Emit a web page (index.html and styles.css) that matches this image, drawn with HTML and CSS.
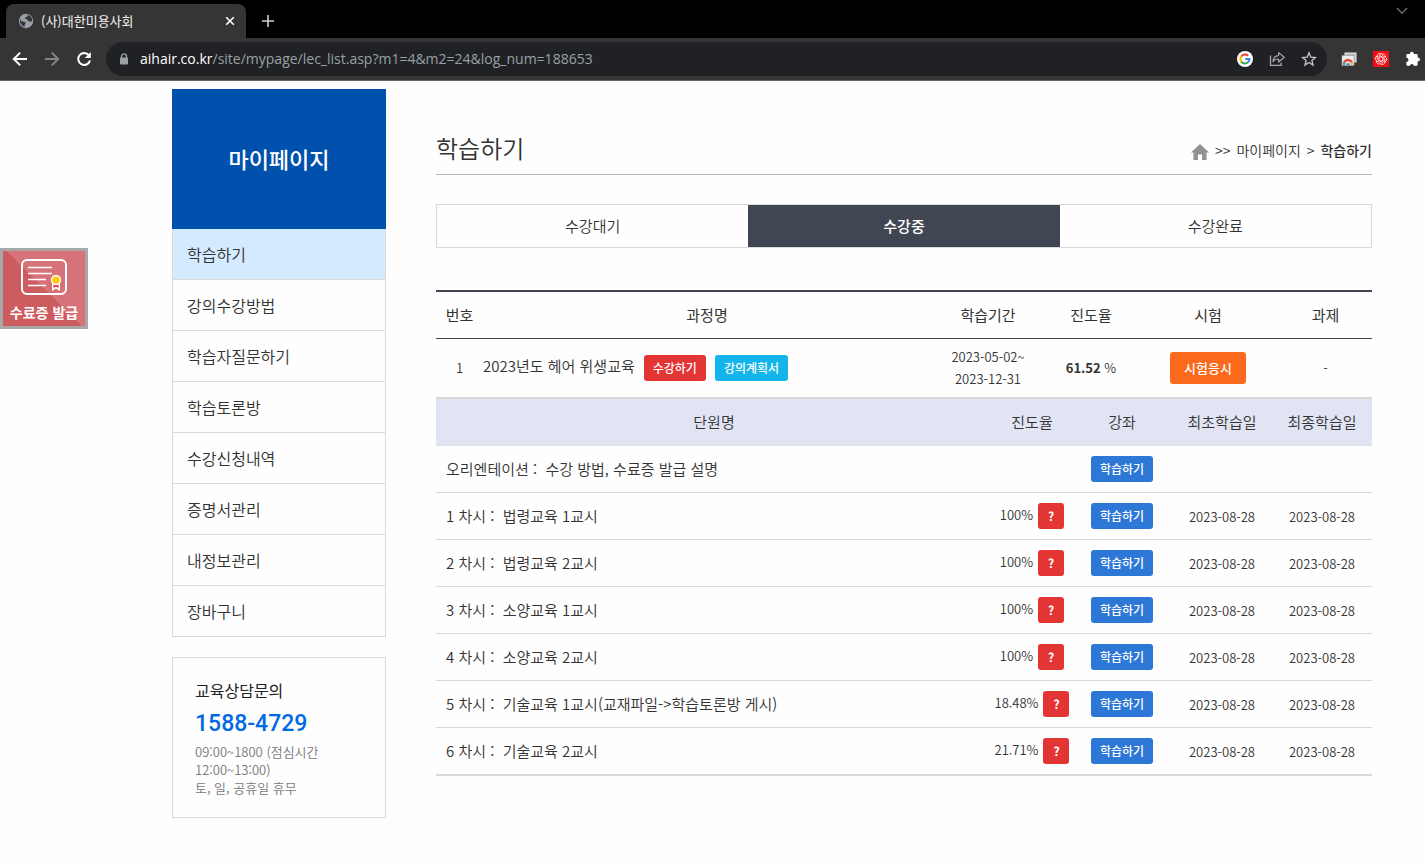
FILE: index.html
```html
<!DOCTYPE html>
<html lang="ko">
<head>
    <meta charset="UTF-8">
    <meta name="viewport" content="width=device-width, initial-scale=1.0">
    <title>(사)대한미용사회</title>
    <link rel="stylesheet" href="styles.css">
</head>
<body>
<!-- Browser window -->
<div class="browser">
    <div class="tab-strip">
        <div class="browser-tab">
            <svg class="globe" viewBox="0 0 16 16" width="16" height="16">
                <circle cx="8" cy="8" r="7.2" fill="#9aa0a8"/>
                <path d="M2 5.6 L3 8.2 L6 8.4 L8 10 L6.8 11.4 L6.6 13.8 L4.4 12.8 L2 9.8Z M7 2 L10 1.8 L9.6 3.4 L7.4 4.2 L7 5.8 L9.4 6.6 L10.6 8.6 L14 8.4 L14 5.6 L12.6 3.6 L11 2.6 L10 1.6Z" fill="#35363a"/>
            </svg>
            <span class="tab-title">(사)대한미용사회</span>
            <button type="button" class="icon-btn" aria-label="탭 닫기">
                <svg viewBox="0 0 10 10" width="10" height="10"><path d="M1.2 1.2 L8.8 8.8 M8.8 1.2 L1.2 8.8" stroke="#fff" stroke-width="1.6"/></svg>
            </button>
        </div>
        <button type="button" class="icon-btn new-tab" aria-label="새 탭">
            <svg viewBox="0 0 12 12" width="12" height="12"><path d="M6 0 V12 M0 6 H12" stroke="#cfcfcf" stroke-width="1.6"/></svg>
        </button>
        <button type="button" class="icon-btn tab-search" aria-label="탭 검색">
            <svg viewBox="0 0 12 8" width="12" height="8"><path d="M1 1 L6 6.4 L11 1" fill="none" stroke="#777" stroke-width="1.2"/></svg>
        </button>
    </div>
    <div class="toolbar">
        <div class="nav-buttons">
            <button type="button" class="icon-btn" aria-label="뒤로">
                <svg viewBox="0 0 16 16" width="16" height="16"><path d="M15 8 H2 M8.2 1.6 L1.8 8 L8.2 14.4" fill="none" stroke="#fff" stroke-width="2"/></svg>
            </button>
            <button type="button" class="icon-btn" aria-label="앞으로">
                <svg viewBox="0 0 16 16" width="16" height="16"><path d="M1 8 H14 M7.8 1.6 L14.2 8 L7.8 14.4" fill="none" stroke="#858585" stroke-width="2"/></svg>
            </button>
            <button type="button" class="icon-btn" aria-label="새로고침">
                <svg viewBox="0 0 16 16" width="16" height="16"><path d="M13.2 4.6 A6 6 0 1 0 14 9.6" fill="none" stroke="#fff" stroke-width="2"/><path d="M14.8 1 V7 H8.8Z" fill="#fff"/></svg>
            </button>
        </div>
        <div class="address-bar">
            <svg viewBox="0 0 10 12" width="10" height="12"><path d="M2.5 5 V3.4 A2.5 2.5 0 0 1 7.5 3.4 V5" fill="none" stroke="#9aa0a6" stroke-width="1.4"/><rect x="1" y="4.4" width="8" height="7" rx="1" fill="#9aa0a6"/></svg>
            <div class="url" role="textbox" contenteditable="true" spellcheck="false" aria-label="주소"><span class="host">aihair.co.kr</span>/site/mypage/lec_list.asp?m1=4&amp;m2=24&amp;log_num=188653</div>
            <div class="address-icons">
                <button type="button" class="icon-btn" aria-label="Google">
                    <svg viewBox="0 0 16 16" width="16" height="16">
                        <circle cx="8" cy="8" r="8" fill="#fff"/>
                        <g fill="none" stroke-width="2.2">
                            <path d="M4.3 5.4 A4.5 4.5 0 0 1 11.2 4.8" stroke="#ea4335"/>
                            <path d="M4.3 10.6 A4.5 4.5 0 0 1 4.3 5.4" stroke="#fbbc05"/>
                            <path d="M11 11.3 A4.5 4.5 0 0 1 4.3 10.6" stroke="#34a853"/>
                            <path d="M8.2 8 H12.5 A4.5 4.5 0 0 1 11 11.3" stroke="#4285f4"/>
                        </g>
                    </svg>
                </button>
                <button type="button" class="icon-btn" aria-label="공유">
                    <svg viewBox="0 0 16 16" width="16" height="16"><path d="M1.5 4.4 V14.4 H12.2 V11.5" fill="none" stroke="#a5a8ad" stroke-width="1.3"/><path d="M4 10.6 C4.2 7 6.2 4.8 9.6 4.6 V1.6 L15.2 6.3 L9.6 11 V8 C7 8 5.2 8.8 4 10.6Z" fill="none" stroke="#a5a8ad" stroke-width="1.2" stroke-linejoin="round"/></svg>
                </button>
                <button type="button" class="icon-btn" aria-label="북마크">
                    <svg viewBox="0 0 16 16" width="16" height="16"><path d="M8 1.8 L9.8 6.2 L14.4 6.5 L10.9 9.4 L12 14 L8 11.5 L4 14 L5.1 9.4 L1.6 6.5 L6.2 6.2Z" fill="none" stroke="#c4c6c9" stroke-width="1.3"/></svg>
                </button>
            </div>
        </div>
        <div class="extensions">
            <button type="button" class="icon-btn" aria-label="캡처">
                <svg viewBox="0 0 16 16" width="16" height="16"><rect x="4" y="2" width="11" height="9" fill="#b8bcc2" stroke="#eee"/><rect x="1" y="4.5" width="12" height="10" fill="#eceef0" stroke="#999" stroke-width=".6"/><path d="M3 13 A4 4 0 0 1 11 13" fill="none" stroke="#e8453c" stroke-width="2.4"/><path d="M3 13.9 V11" stroke="#3aa757" stroke-width="2"/><path d="M11 13.9 V11" stroke="#f9bb2d" stroke-width="2"/><path d="M5 14 A2 2 0 0 1 9 14Z" fill="#4688f1"/></svg>
            </button>
            <button type="button" class="icon-btn" aria-label="ChatGPT">
                <svg viewBox="0 0 16 16" width="16" height="16"><rect width="16" height="16" fill="#f80d12"/><g fill="none" stroke="#fff" stroke-width="0.8"><path id="petal" d="M6 9.2 V5 L8.6 3.3 A2.6 2.6 0 0 1 12.5 6"/><use href="#petal" transform="rotate(60 8 8)"/><use href="#petal" transform="rotate(120 8 8)"/><use href="#petal" transform="rotate(180 8 8)"/><use href="#petal" transform="rotate(240 8 8)"/><use href="#petal" transform="rotate(300 8 8)"/></g></svg>
            </button>
            <button type="button" class="icon-btn" aria-label="확장 프로그램">
                <svg viewBox="0 0 16 16" width="16" height="16"><path d="M1.4 4 Q1.4 3 2.4 3 H5 V2.6 A1.9 1.9 0 0 1 8.8 2.6 V3 H11.6 Q12.6 3 12.6 4 V6.6 H13 A1.9 1.9 0 0 1 13 10.4 H12.6 V13.8 Q12.6 14.8 11.6 14.8 H8.8 A1.9 1.9 0 0 0 5 14.8 H2.4 Q1.4 14.8 1.4 13.8 V11 A2.1 2.1 0 0 0 1.4 6.8Z" fill="#fff"/></svg>
            </button>
        </div>
    </div>
</div>

<!-- Page -->
<div class="page">
    <a href="#" class="certificate">
        <svg viewBox="0 0 48 38" width="48" height="38">
            <rect x="2" y="2" width="44" height="34" rx="5" fill="none" stroke="#fff" stroke-width="2"/>
            <path d="M8 9.5 H32 M8 15.5 H32 M8 21.5 H26 M8 27.5 H26" stroke="#fff" stroke-width="1.6"/>
            <path d="M32 25 V33 L36 30.5 L40 33 V25Z" fill="#fff"/>
            <path d="M33.5 26 V30 L36 28.6 L38.5 30 V26Z" fill="#dc2338"/>
            <circle cx="36" cy="22" r="4.5" fill="#fccb17" stroke="#fff" stroke-width="1.4"/>
        </svg>
        <span>수료증 발급</span>
    </a>

    <aside class="sidebar">
        <h1>마이페이지</h1>
        <ul class="menu">
            <li class="active"><a href="#">학습하기</a></li>
            <li><a href="#">강의수강방법</a></li>
            <li><a href="#">학습자질문하기</a></li>
            <li><a href="#">학습토론방</a></li>
            <li><a href="#">수강신청내역</a></li>
            <li><a href="#">증명서관리</a></li>
            <li><a href="#">내정보관리</a></li>
            <li><a href="#">장바구니</a></li>
        </ul>
        <div class="contact">
            <h3>교육상담문의</h3>
            <p class="phone">1588-4729</p>
            <p>09:00~1800 (점심시간 12:00~13:00)</p>
            <p>토, 일, 공휴일 휴무</p>
        </div>
    </aside>

    <main class="content">
        <div class="content-head">
            <h2>학습하기</h2>
            <nav class="breadcrumb">
                <a href="#" class="home" aria-label="홈">
                    <svg viewBox="0 0 18 16" width="18" height="16"><path d="M9 0 L18 8.6 H15.6 V16 H11 V10.6 H7 V16 H2.4 V8.6 H0Z" fill="#929292"/></svg>
                </a>
                <span>&gt;&gt;</span>
                <a href="#">마이페이지</a>
                <span>&gt;</span>
                <strong>학습하기</strong>
            </nav>
        </div>

        <nav class="tabs">
            <a href="#">수강대기</a>
            <a href="#" class="on">수강중</a>
            <a href="#">수강완료</a>
        </nav>

        <table class="course">
            <colgroup>
                <col class="c-no"><col><col class="c-period"><col class="c-rate"><col class="c-exam"><col class="c-task">
            </colgroup>
            <thead>
                <tr><th>번호</th><th>과정명</th><th>학습기간</th><th>진도율</th><th>시험</th><th>과제</th></tr>
            </thead>
            <tbody>
                <tr>
                    <td>1</td>
                    <td>
                        <div class="course-name">
                            <span>2023년도 헤어 위생교육</span>
                            <button type="button" class="btn red">수강하기</button>
                            <button type="button" class="btn sky">강의계획서</button>
                        </div>
                    </td>
                    <td>2023-05-02~<br>2023-12-31</td>
                    <td><strong>61.52</strong> %</td>
                    <td><button type="button" class="btn orange">시험응시</button></td>
                    <td>-</td>
                </tr>
            </tbody>
        </table>

        <table class="units">
            <colgroup>
                <col><col class="u-rate"><col class="u-col"><col class="u-col"><col class="u-col">
            </colgroup>
            <thead>
                <tr><th>단원명</th><th>진도율</th><th>강좌</th><th>최초학습일</th><th>최종학습일</th></tr>
            </thead>
            <tbody>
                <tr>
                    <td>오리엔테이션 :&nbsp; 수강 방법, 수료증 발급 설명</td>
                    <td></td>
                    <td><button type="button" class="btn blue">학습하기</button></td>
                    <td></td>
                    <td></td>
                </tr>
                <tr>
                    <td>1 차시 :&nbsp; 법령교육 1교시</td>
                    <td><div class="rate"><span>100%</span><button type="button" class="btn red help">?</button></div></td>
                    <td><button type="button" class="btn blue">학습하기</button></td>
                    <td>2023-08-28</td>
                    <td>2023-08-28</td>
                </tr>
                <tr>
                    <td>2 차시 :&nbsp; 법령교육 2교시</td>
                    <td><div class="rate"><span>100%</span><button type="button" class="btn red help">?</button></div></td>
                    <td><button type="button" class="btn blue">학습하기</button></td>
                    <td>2023-08-28</td>
                    <td>2023-08-28</td>
                </tr>
                <tr>
                    <td>3 차시 :&nbsp; 소양교육 1교시</td>
                    <td><div class="rate"><span>100%</span><button type="button" class="btn red help">?</button></div></td>
                    <td><button type="button" class="btn blue">학습하기</button></td>
                    <td>2023-08-28</td>
                    <td>2023-08-28</td>
                </tr>
                <tr>
                    <td>4 차시 :&nbsp; 소양교육 2교시</td>
                    <td><div class="rate"><span>100%</span><button type="button" class="btn red help">?</button></div></td>
                    <td><button type="button" class="btn blue">학습하기</button></td>
                    <td>2023-08-28</td>
                    <td>2023-08-28</td>
                </tr>
                <tr>
                    <td>5 차시 :&nbsp; 기술교육 1교시(교재파일-&gt;학습토론방 게시)</td>
                    <td><div class="rate"><span>18.48%</span><button type="button" class="btn red help">?</button></div></td>
                    <td><button type="button" class="btn blue">학습하기</button></td>
                    <td>2023-08-28</td>
                    <td>2023-08-28</td>
                </tr>
                <tr>
                    <td>6 차시 :&nbsp; 기술교육 2교시</td>
                    <td><div class="rate"><span>21.71%</span><button type="button" class="btn red help">?</button></div></td>
                    <td><button type="button" class="btn blue">학습하기</button></td>
                    <td>2023-08-28</td>
                    <td>2023-08-28</td>
                </tr>
            </tbody>
        </table>
    </main>
</div>
</body>
</html>
```
FILE: styles.css
```css
* {
    margin: 0;
    padding: 0;
    box-sizing: border-box;
}

body {
    font-family: "Noto Sans CJK KR", sans-serif;
    font-size: 15px;
    font-weight: 350;
    color: #333;
    background: #fefefe;
}

a {
    color: inherit;
    text-decoration: none;
}

button {
    font-family: inherit;
    border: none;
    cursor: pointer;
}

svg {
    display: block;
}

/* Browser window */
.browser {
    background: #000;
}

.icon-btn {
    background: none;
    flex: none;
}

.tab-strip {
    display: flex;
    align-items: center;
    height: 38px;
    padding: 4px 17px 0 6px;
}

.browser-tab {
    display: flex;
    align-items: center;
    gap: 7px;
    width: 240px;
    height: 34px;
    padding: 0 11px 0 12px;
    background: #353535;
    border-radius: 8px 8px 0 0;
}

.tab-title {
    flex: 1;
    font-size: 13px;
    font-weight: 400;
    line-height: 18px;
    color: #f1f1f1;
}

.new-tab {
    margin-left: 16px;
}

.tab-search {
    margin: -20px 0 0 auto;
}

.toolbar {
    display: flex;
    align-items: center;
    gap: 14px;
    height: 43px;
    padding: 0 4px 0 12px;
    background: #353535;
    border-bottom: 1px solid #666;
}

.nav-buttons,
.address-icons,
.extensions {
    display: flex;
    gap: 16px;
}

.address-bar {
    flex: 1;
    display: flex;
    align-items: center;
    gap: 11px;
    height: 34px;
    padding: 0 10px 0 13px;
    background: #202124;
    border-radius: 17px;
}

.url {
    flex: 1;
    font-family: "Open Sans", sans-serif;
    font-size: 14px;
    font-weight: 400;
    line-height: 20px;
    color: #9aa0a6;
    outline: none;
}

.host {
    color: #fff;
}

/* Page */
.page {
    position: relative;
    display: flex;
    align-items: flex-start;
    gap: 50px;
    padding: 8px 53px 40px 172px;
}

.certificate {
    position: absolute;
    left: 0;
    top: 167px;
    display: flex;
    flex-direction: column;
    align-items: center;
    gap: 4px;
    width: 88px;
    height: 81px;
    padding-top: 7px;
    border: 3px solid #a8a8a8;
    background: linear-gradient(45deg, #cc5c60 50%, #d67378 50%);
    color: #fff;
    font-size: 14px;
    font-weight: 700;
    line-height: 24px;
    white-space: nowrap;
}

/* Sidebar */
.sidebar {
    flex: none;
    width: 214px;
}

.sidebar h1 {
    height: 140px;
    line-height: 138px;
    background: #0051ad;
    color: #fff;
    font-size: 22px;
    font-weight: 500;
    text-align: center;
}

.menu {
    list-style: none;
    border: 1px solid #d9d9d9;
    border-width: 0 1px;
}

.menu li {
    border-bottom: 1px solid #d9d9d9;
}

.menu a {
    display: block;
    padding-left: 14px;
    font-size: 16px;
    line-height: 50px;
}

.menu .active {
    background: #d4eaff;
}

.contact {
    margin-top: 20px;
    padding: 20px 22px;
    border: 1px solid #d9d9d9;
    font-size: 13px;
    line-height: 18px;
    color: #777;
}

.contact h3 {
    margin-bottom: 4px;
    font-size: 16px;
    font-weight: 400;
    line-height: 24px;
    color: #222;
}

.contact .phone {
    margin-bottom: 1px;
    font-family: Roboto, sans-serif;
    font-size: 23px;
    font-weight: 500;
    line-height: 36px;
    color: #0068e5;
}

/* Content */
.content {
    flex: 1;
}

.content-head {
    display: flex;
    justify-content: space-between;
    align-items: center;
    height: 86px;
    padding-top: 32px;
    border-bottom: 1px solid #b8bcbd;
}

.content-head h2 {
    font-size: 24px;
    font-weight: 350;
    line-height: 36px;
}

.breadcrumb {
    display: flex;
    align-items: center;
    gap: 6px;
    padding-top: 4px;
    font-size: 14px;
    line-height: 20px;
}

.breadcrumb .home {
    align-self: flex-end;
}

.breadcrumb strong {
    font-weight: 500;
}

.tabs {
    display: flex;
    margin-top: 29px;
    border: 1px solid #d9d9d9;
}

.tabs a {
    flex: 1;
    line-height: 42px;
    text-align: center;
}

.tabs .on {
    background: #414653;
    color: #fff;
    font-weight: 500;
}

table {
    width: 100%;
    table-layout: fixed;
    border-collapse: separate;
    border-spacing: 0;
    text-align: center;
}

.course {
    margin-top: 42px;
    border-top: 2px solid #414653;
    border-bottom: 2px solid #d9d9d9;
    font-size: 13px;
    line-height: 22px;
}

.course th {
    height: 47px;
    border-bottom: 1px solid #414653;
    font-size: 15px;
    font-weight: 400;
}

.course td {
    height: 58px;
}

.c-no { width: 47px; }
.c-period { width: 114px; }
.c-rate { width: 92px; }
.c-exam { width: 142px; }
.c-task { width: 93px; }

.course-name {
    display: flex;
    align-items: center;
    gap: 9px;
    font-size: 15px;
}

.course-name span,
.rate span {
    padding-bottom: 4px;
}

.units {
    border-bottom: 1px solid #d9d9d9;
    font-size: 13px;
}

.units th {
    height: 47px;
    padding-bottom: 2px;
    background: #e1e4f3;
    border-bottom: 1px solid #dfe6e0;
    font-size: 15px;
    font-weight: 350;
}

.units td {
    height: 47px;
    border-bottom: 1px solid #d9d9d9;
}

.units td:first-child {
    padding: 0 0 2px 10px;
    font-size: 15px;
    text-align: left;
}

.u-rate { width: 80px; }
.u-col { width: 100px; }

.rate {
    display: flex;
    justify-content: center;
    align-items: center;
    gap: 5px;
}

/* Buttons */
.btn {
    height: 26px;
    padding: 0 9px;
    border-radius: 3px;
    color: #fff;
    font-size: 12px;
    font-weight: 500;
    line-height: 26px;
    vertical-align: middle;
}

.red { background: #e43535; }
.sky { background: #13b5ea; }
.blue { background: #2d77d6; }

.orange {
    height: 32px;
    padding: 0 14px;
    background: #fb6a1c;
    font-size: 13px;
    line-height: 32px;
}

.help {
    width: 26px;
    padding: 0;
    font-weight: 700;
}
```
